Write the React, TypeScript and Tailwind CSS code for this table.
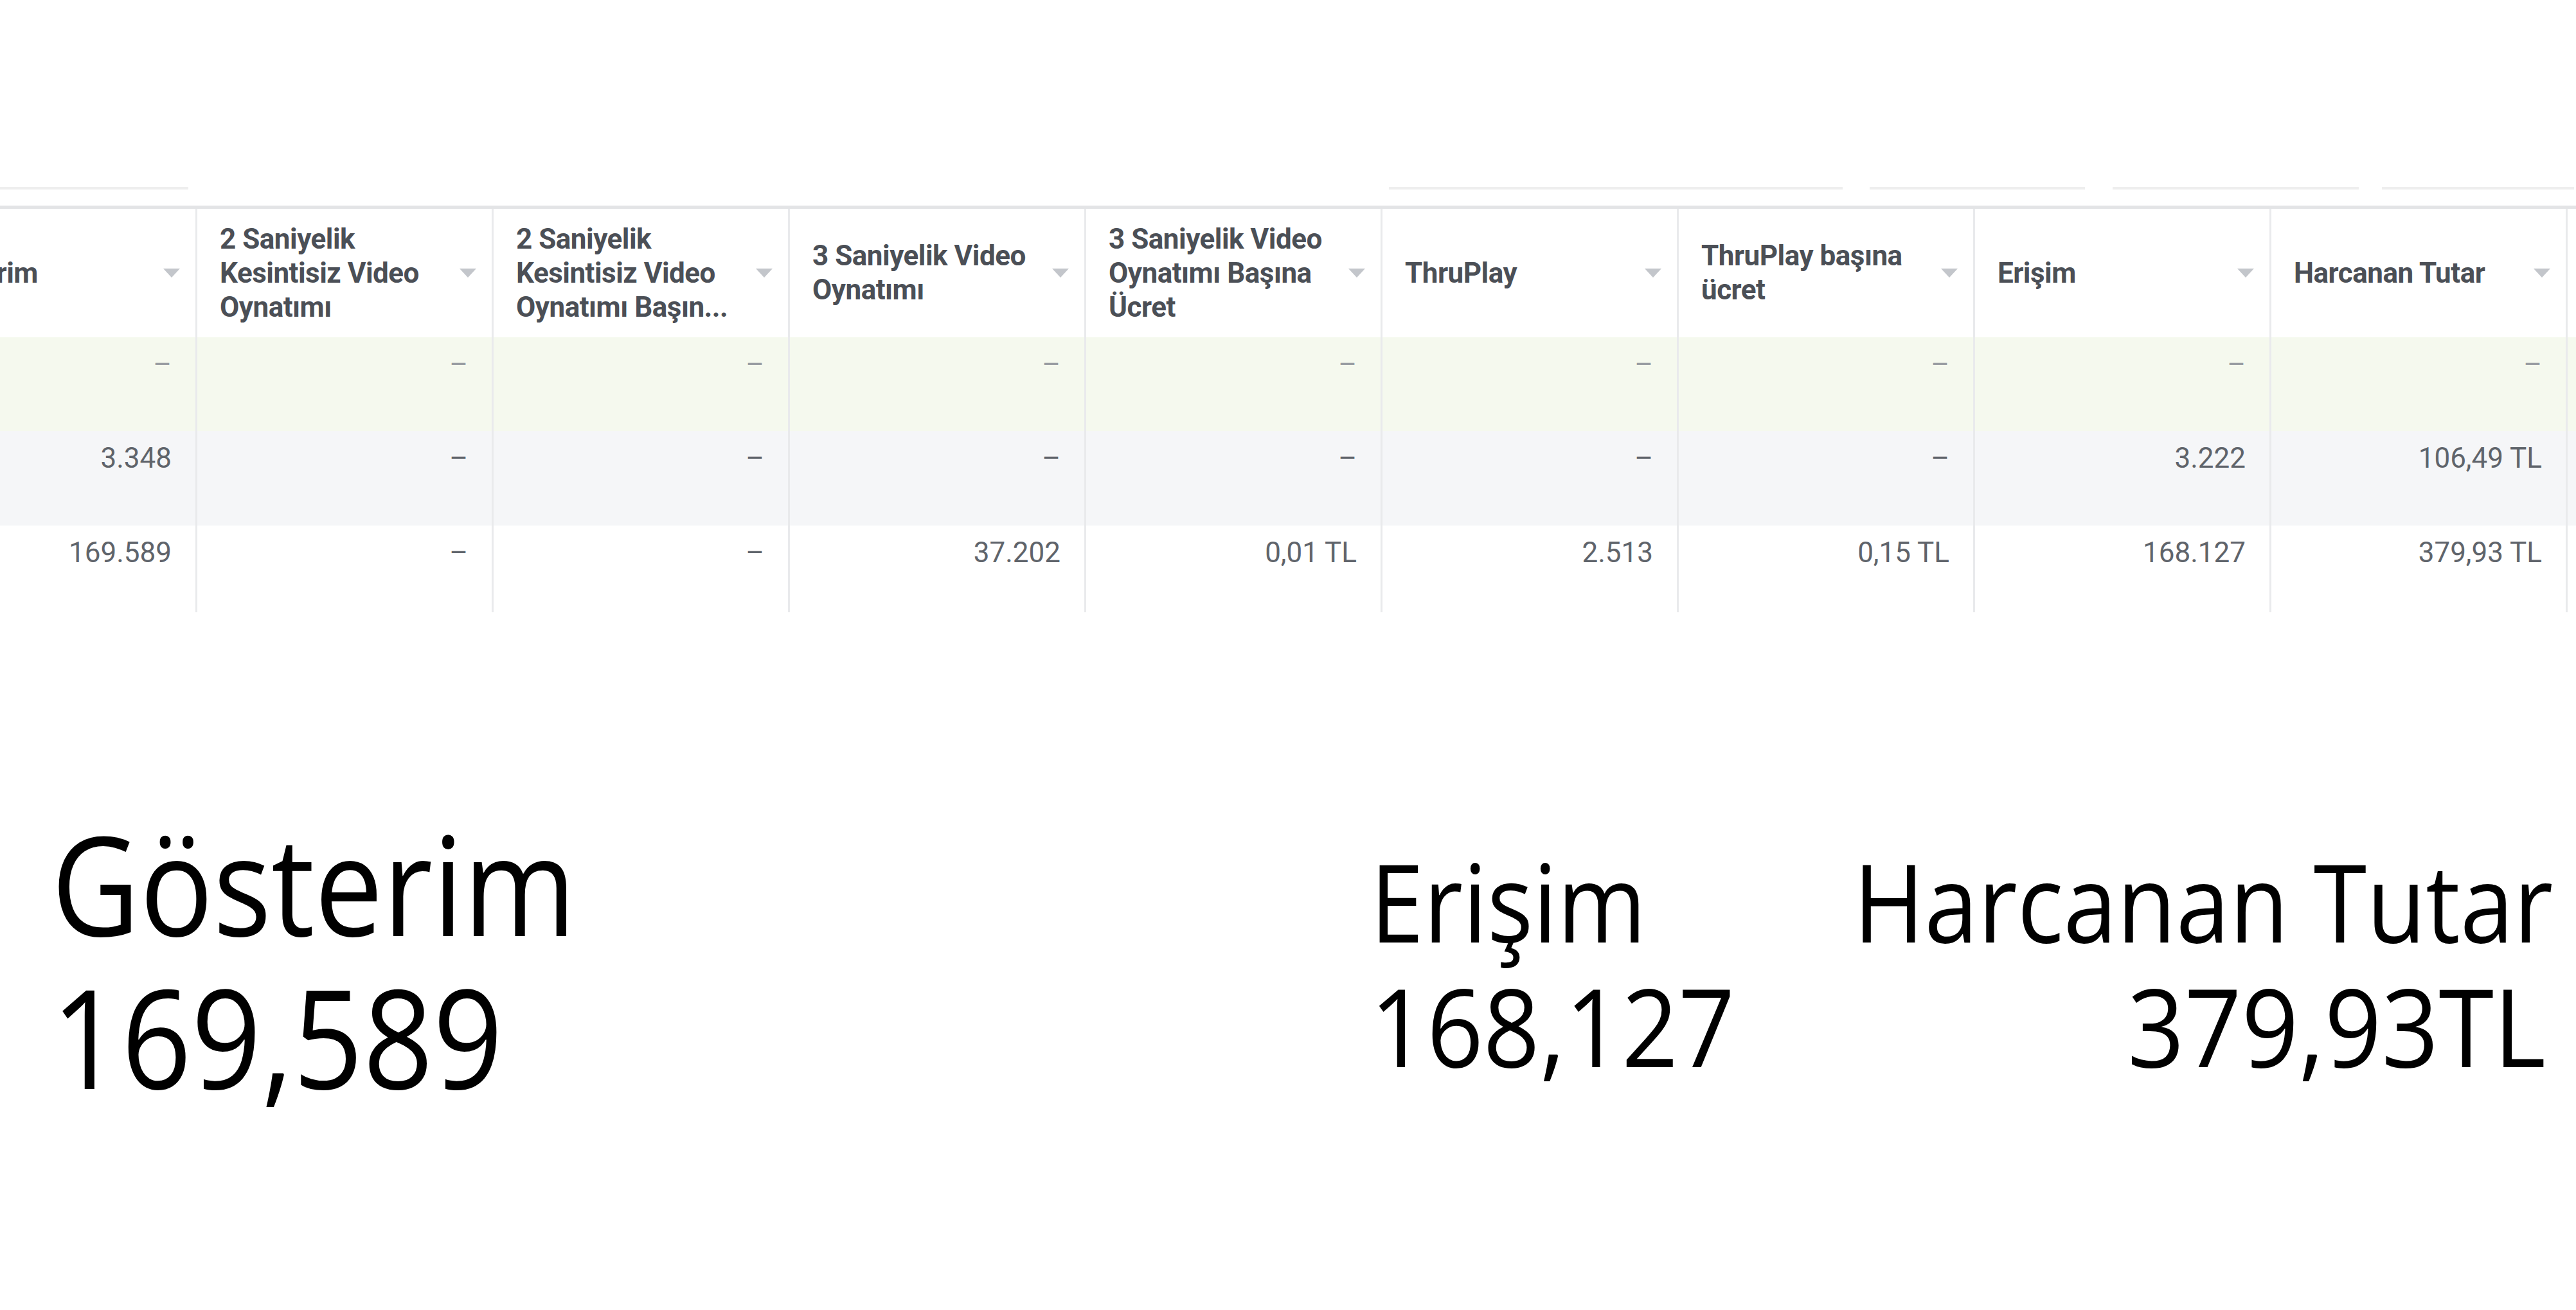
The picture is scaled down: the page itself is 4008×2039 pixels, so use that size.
import React from "react";

type Column = { title: string[]; values: string[] };

const COLUMNS: Column[] = [
  { title: ["Gösterim"], values: ["–", "3.348", "169.589"] },
  { title: ["2 Saniyelik", "Kesintisiz Video", "Oynatımı"], values: ["–", "–", "–"] },
  { title: ["2 Saniyelik", "Kesintisiz Video", "Oynatımı Başın..."], values: ["–", "–", "–"] },
  { title: ["3 Saniyelik Video", "Oynatımı"], values: ["–", "–", "37.202"] },
  { title: ["3 Saniyelik Video", "Oynatımı Başına", "Ücret"], values: ["–", "–", "0,01 TL"] },
  { title: ["ThruPlay"], values: ["–", "–", "2.513"] },
  { title: ["ThruPlay başına", "ücret"], values: ["–", "–", "0,15 TL"] },
  { title: ["Erişim"], values: ["–", "3.222", "168.127"] },
  { title: ["Harcanan Tutar"], values: ["–", "106,49 TL", "379,93 TL"] },
];

const ROWS = [
  { bg: "bg-[#f5f9ee]", height: "h-[146px]", tone: "text-[#9a9ea3]" },
  { bg: "bg-[#f5f6f8]", height: "h-[147px]", tone: "text-[#5f646b]" },
  { bg: "bg-white", height: "h-[135px]", tone: "text-[#5f646b]" },
];

function SortArrow() {
  return (
    <svg width="26" height="14" viewBox="0 0 26 14" className="shrink-0">
      <polygon points="0,0 26,0 13,14" fill="#c3c6cb" />
    </svg>
  );
}

function MetricsTable() {
  return (
    <div className="overflow-hidden font-['Roboto',sans-serif]">
      <div className="-ml-[154px]">
        <div className="flex h-[205px] border-t-[5px] border-[#e3e4e6] bg-white shadow-[0_2px_3px_rgba(0,0,0,0.04)]">
          {COLUMNS.map((col, i) => (
            <div
              key={i}
              className="flex w-[461px] shrink-0 items-center justify-between border-r-[3px] border-[#e9eaec] pl-[35px] pr-[24px]"
            >
              <div className="text-[44px] font-bold leading-[53px] tracking-[-0.5px] whitespace-nowrap text-[#4b4f56]">
                {col.title.map((line, j) => (
                  <div key={j}>{line}</div>
                ))}
              </div>
              <SortArrow />
            </div>
          ))}
          <div className="flex-1" />
        </div>
        {ROWS.map((row, r) => (
          <div key={r} className={`flex ${row.height} ${row.bg}`}>
            {COLUMNS.map((col, i) => (
              <div
                key={i}
                className={`w-[461px] shrink-0 border-r-[3px] border-[#e9eaec] pt-[16px] pr-[37px] text-right text-[44px] leading-[53px] ${
                  col.values[r] === "–" ? row.tone : "text-[#5f646b]"
                }`}
              >
                {col.values[r]}
              </div>
            ))}
            <div className="flex-1" />
          </div>
        ))}
      </div>
    </div>
  );
}

function ToolbarEdges() {
  return (
    <div className="flex h-[4px]">
      <div className="w-[293px] bg-[#eeeeee]" />
      <div className="ml-[1868px] w-[706px] bg-[#eeeeee]" />
      <div className="ml-[42px] w-[335px] bg-[#eeeeee]" />
      <div className="ml-[43px] w-[383px] bg-[#eeeeee]" />
      <div className="ml-[36px] w-[299px] bg-[#eeeeee]" />
    </div>
  );
}

export default function App() {
  return (
    <main className="flow-root min-h-screen w-full bg-white pt-[291px]">
      <ToolbarEdges />
      <div className="mt-[25px]">
        <MetricsTable />
      </div>

      <div className="mt-[314px] flex items-start font-['Open_Sans',sans-serif] text-black">
        <div className="ml-[80px] w-[2052px] shrink-0 text-[214px] leading-none whitespace-nowrap">
          <div className="origin-left scale-x-[0.885]">Gösterim</div>
          <div className="mt-[24px] origin-left scale-x-[0.89]">169,589</div>
        </div>
        <div className="mt-[51px] min-w-0 flex-1 text-[168px] leading-none whitespace-nowrap">
          <div className="origin-left scale-x-[0.89]">Erişim</div>
          <div className="mt-[26px] origin-left scale-x-[0.915]">168,127</div>
        </div>
        <div className="mt-[51px] shrink-0 pr-[36px] text-right text-[168px] leading-none whitespace-nowrap">
          <div className="origin-right scale-x-[0.892]">Harcanan Tutar</div>
          <div className="mt-[26px] origin-right scale-x-[0.925] pr-[12px]">379,93TL</div>
        </div>
      </div>
    </main>
  );
}
